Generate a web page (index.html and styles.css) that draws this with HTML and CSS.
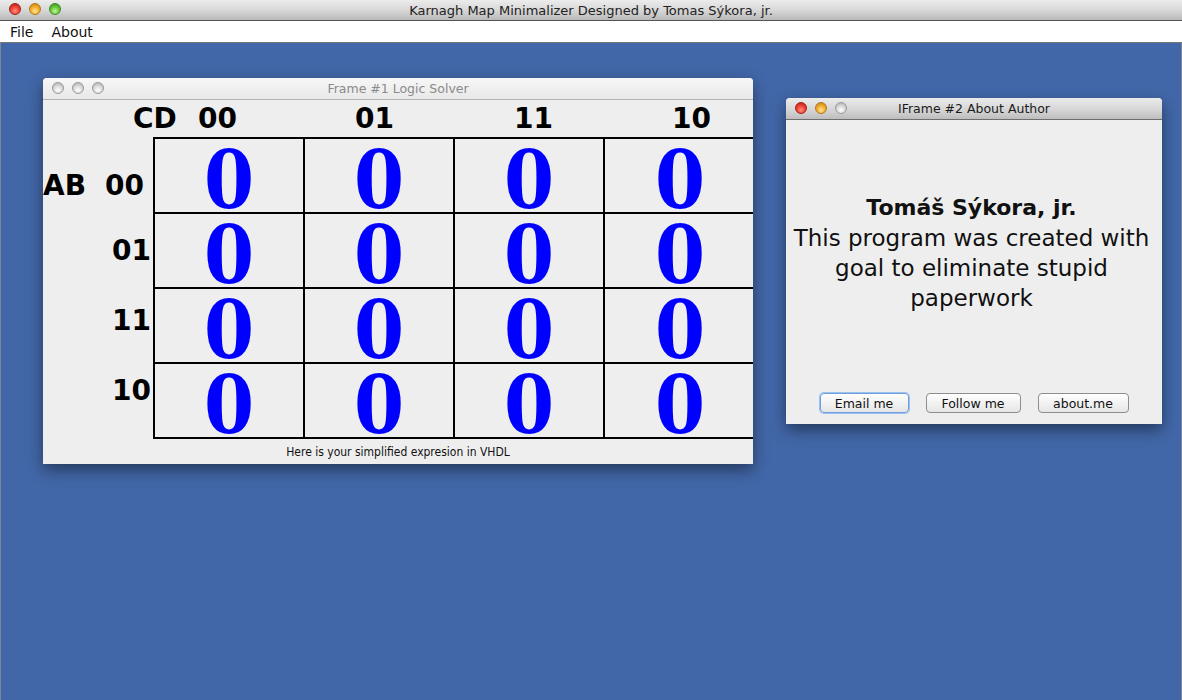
FILE: index.html
```html
<!DOCTYPE html>
<html>
<head>
<meta charset="utf-8">
<title>Karnagh Map Minimalizer</title>
<link rel="stylesheet" href="styles.css">
</head>
<body>
<div class="app">
  <div class="titlebar">
    <div class="lights">
      <span class="light red"></span><span class="light yellow"></span><span class="light green"></span>
    </div>
    <div class="title">Karnagh Map Minimalizer Designed by Tomas Sýkora, jr.</div>
  </div>
  <div class="menubar">
    <span class="menu">File</span>
    <span class="menu">About</span>
  </div>
  <div class="desktop">
    <div class="win win-solver">
      <div class="win-title inactive">
        <div class="lights small">
          <span class="light gray"></span><span class="light gray"></span><span class="light gray"></span>
        </div>
        <div class="wt">Frame #1 Logic Solver</div>
      </div>
      <div class="solver">
        <div class="col-heads">
          <span class="h-cd">CD</span>
          <span class="h-c1">00</span>
          <span class="h-c2">01</span>
          <span class="h-c3">11</span>
          <span class="h-c4">10</span>
        </div>
        <div class="body-row">
          <div class="row-heads">
            <div class="rh first"><span class="ab">AB</span><span>00</span></div>
            <div class="rh">01</div>
            <div class="rh">11</div>
            <div class="rh">10</div>
          </div>
          <div class="kmap">
            <div class="cell">0</div><div class="cell">0</div><div class="cell">0</div><div class="cell">0</div>
            <div class="cell">0</div><div class="cell">0</div><div class="cell">0</div><div class="cell">0</div>
            <div class="cell">0</div><div class="cell">0</div><div class="cell">0</div><div class="cell">0</div>
            <div class="cell">0</div><div class="cell">0</div><div class="cell">0</div><div class="cell">0</div>
          </div>
        </div>
        <div class="result">Here is your simplified expresion in VHDL</div>
      </div>
    </div>

    <div class="win win-about">
      <div class="win-title active">
        <div class="lights small">
          <span class="light red"></span><span class="light yellow"></span><span class="light gray"></span>
        </div>
        <div class="wt">IFrame #2 About Author</div>
      </div>
      <div class="about">
        <div class="about-text">
          <div class="name">Tomáš Sýkora, jr.</div>
          <div>This program was created with</div>
          <div>goal to eliminate stupid</div>
          <div>paperwork</div>
        </div>
        <div class="buttons">
          <button class="btn focus">Email me</button>
          <button class="btn">Follow me</button>
          <button class="btn">about.me</button>
        </div>
      </div>
    </div>
  </div>
</div>
</body>
</html>
```

FILE: styles.css
```css
* { box-sizing: border-box; }
html, body {
  margin: 0;
  padding: 0;
  width: 1182px;
  height: 700px;
  overflow: hidden;
  font-family: "DejaVu Sans", "Liberation Sans", sans-serif;
}
.app {
  width: 1182px;
  height: 700px;
  display: flex;
  flex-direction: column;
}
.titlebar {
  height: 21px;
  flex: none;
  position: relative;
  background: linear-gradient(#ececec, #d8d8d8 50%, #b9b9b9);
  border-bottom: 1px solid #555;
  display: flex;
  align-items: center;
  justify-content: center;
}
.title {
  font-size: 13px;
  color: #222;
}
.lights {
  position: absolute;
  left: 9px;
  top: 3px;
  display: flex;
  gap: 8px;
}
.light {
  width: 12px;
  height: 12px;
  border-radius: 50%;
  display: block;
}
.light.red {
  background: radial-gradient(circle at 50% 70%, #ff8f7f 0%, #f2473a 45%, #b3150d 100%);
  border: 1px solid #a0201a;
}
.light.yellow {
  background: radial-gradient(circle at 50% 70%, #ffe59a 0%, #f5b031 45%, #c27a0a 100%);
  border: 1px solid #b07a20;
}
.light.green {
  background: radial-gradient(circle at 50% 70%, #c4f5a0 0%, #6ccb3f 45%, #2e8a16 100%);
  border: 1px solid #3d8a25;
}
.light.gray {
  background: radial-gradient(circle at 50% 70%, #ffffff 0%, #dcdcdc 45%, #a8a8a8 100%);
  border: 1px solid #9a9a9a;
}
.menubar {
  height: 22px;
  flex: none;
  background: #fff;
  border-bottom: 1px solid #777;
  display: flex;
  align-items: center;
  padding-left: 10px;
  gap: 18px;
  font-size: 14px;
  color: #111;
}
.desktop {
  flex: 1;
  position: relative;
  background: #4267a8;
  border-left: 1px solid #7f8694;
  border-right: 1px solid #7f8694;
}
.win {
  position: absolute;
  background: #eeeeee;
  border-radius: 4px 4px 0 0;
  box-shadow: 0 6px 16px rgba(0, 0, 0, 0.45);
  display: flex;
  flex-direction: column;
  overflow: hidden;
}
.win-solver {
  left: 42px;
  top: 35px;
  width: 710px;
  height: 386px;
}
.win-about {
  left: 785px;
  top: 55px;
  width: 376px;
  height: 326px;
}
.win-title {
  height: 22px;
  flex: none;
  position: relative;
  display: flex;
  align-items: center;
  justify-content: center;
  font-size: 12.5px;
}
.win-title.inactive {
  background: linear-gradient(#f7f7f7, #e8e8e8);
  border-bottom: 1px solid #b2b2b2;
  color: #8a8a8a;
}
.win-title.active {
  background: linear-gradient(#ebebeb, #d4d4d4 60%, #bdbdbd);
  border-bottom: 1px solid #6e6e6e;
  color: #1a1a1a;
}
.lights.small {
  left: 9px;
  top: 4px;
}
.solver {
  flex: 1;
  display: flex;
  flex-direction: column;
}
.col-heads {
  height: 37px;
  flex: none;
  display: grid;
  grid-template-columns: 65px 157px 159px 158px auto;
  padding-left: 90px;
  align-items: end;
  font-weight: bold;
  font-size: 28px;
  color: #000;
  line-height: 1;
  padding-bottom: 4px;
}
.col-heads span { display: block; }
.body-row {
  display: flex;
  flex: none;
}
.row-heads {
  width: 110px;
  flex: none;
  padding-top: 13px;
  display: flex;
  flex-direction: column;
  font-weight: bold;
  font-size: 28px;
  color: #000;
}
.rh {
  height: 70px;
  display: flex;
  align-items: center;
  justify-content: flex-end;
  padding-right: 2px;
}
.rh.first {
  height: 65px;
  justify-content: space-between;
  padding-right: 9px;
  padding-top: 5px;
}
.kmap {
  width: 600px;
  height: 302px;
  display: grid;
  grid-template-columns: repeat(4, 1fr);
  grid-template-rows: repeat(4, 73px);
  gap: 2px;
  padding: 2px 0 2px 2px;
  background: #000;
}
.cell {
  background: #eeeeee;
  min-height: 0;
  display: block;
  text-align: center;
  font-family: "DejaVu Serif Condensed", "DejaVu Serif", serif;
  font-stretch: condensed;
  font-weight: bold;
  font-size: 80px;
  line-height: 83px;
  color: #0000ff;
}
.cell:nth-child(4n) {
  margin-right: -2px;
}
.result {
  flex: 1;
  display: flex;
  align-items: center;
  justify-content: center;
  font-family: "DejaVu Sans Condensed", "DejaVu Sans", sans-serif;
  font-size: 12px;
  color: #111;
}
.about {
  flex: 1;
  display: flex;
  flex-direction: column;
  align-items: center;
}
.about-text {
  margin-top: 73px;
  margin-right: 5px;
  text-align: center;
  font-size: 23px;
  line-height: 30px;
  color: #111;
}
.name {
  font-weight: bold;
  font-size: 22px;
}
.buttons {
  margin-top: auto;
  margin-bottom: 11px;
  display: flex;
  gap: 17px;
}
.btn {
  height: 20px;
  border: 1px solid #8e8e8e;
  border-radius: 4px;
  background: linear-gradient(#ffffff, #f2f2f2 50%, #e6e6e6);
  font-family: "DejaVu Sans", sans-serif;
  font-size: 12.5px;
  color: #111;
  padding: 0;
  width: 95px;
}
.btn.focus {
  width: 89px;
  border-color: #6f9fdc;
  box-shadow: 0 0 0 1px #9cc0ee;
}
.btn:last-child {
  width: 91px;
}
```
